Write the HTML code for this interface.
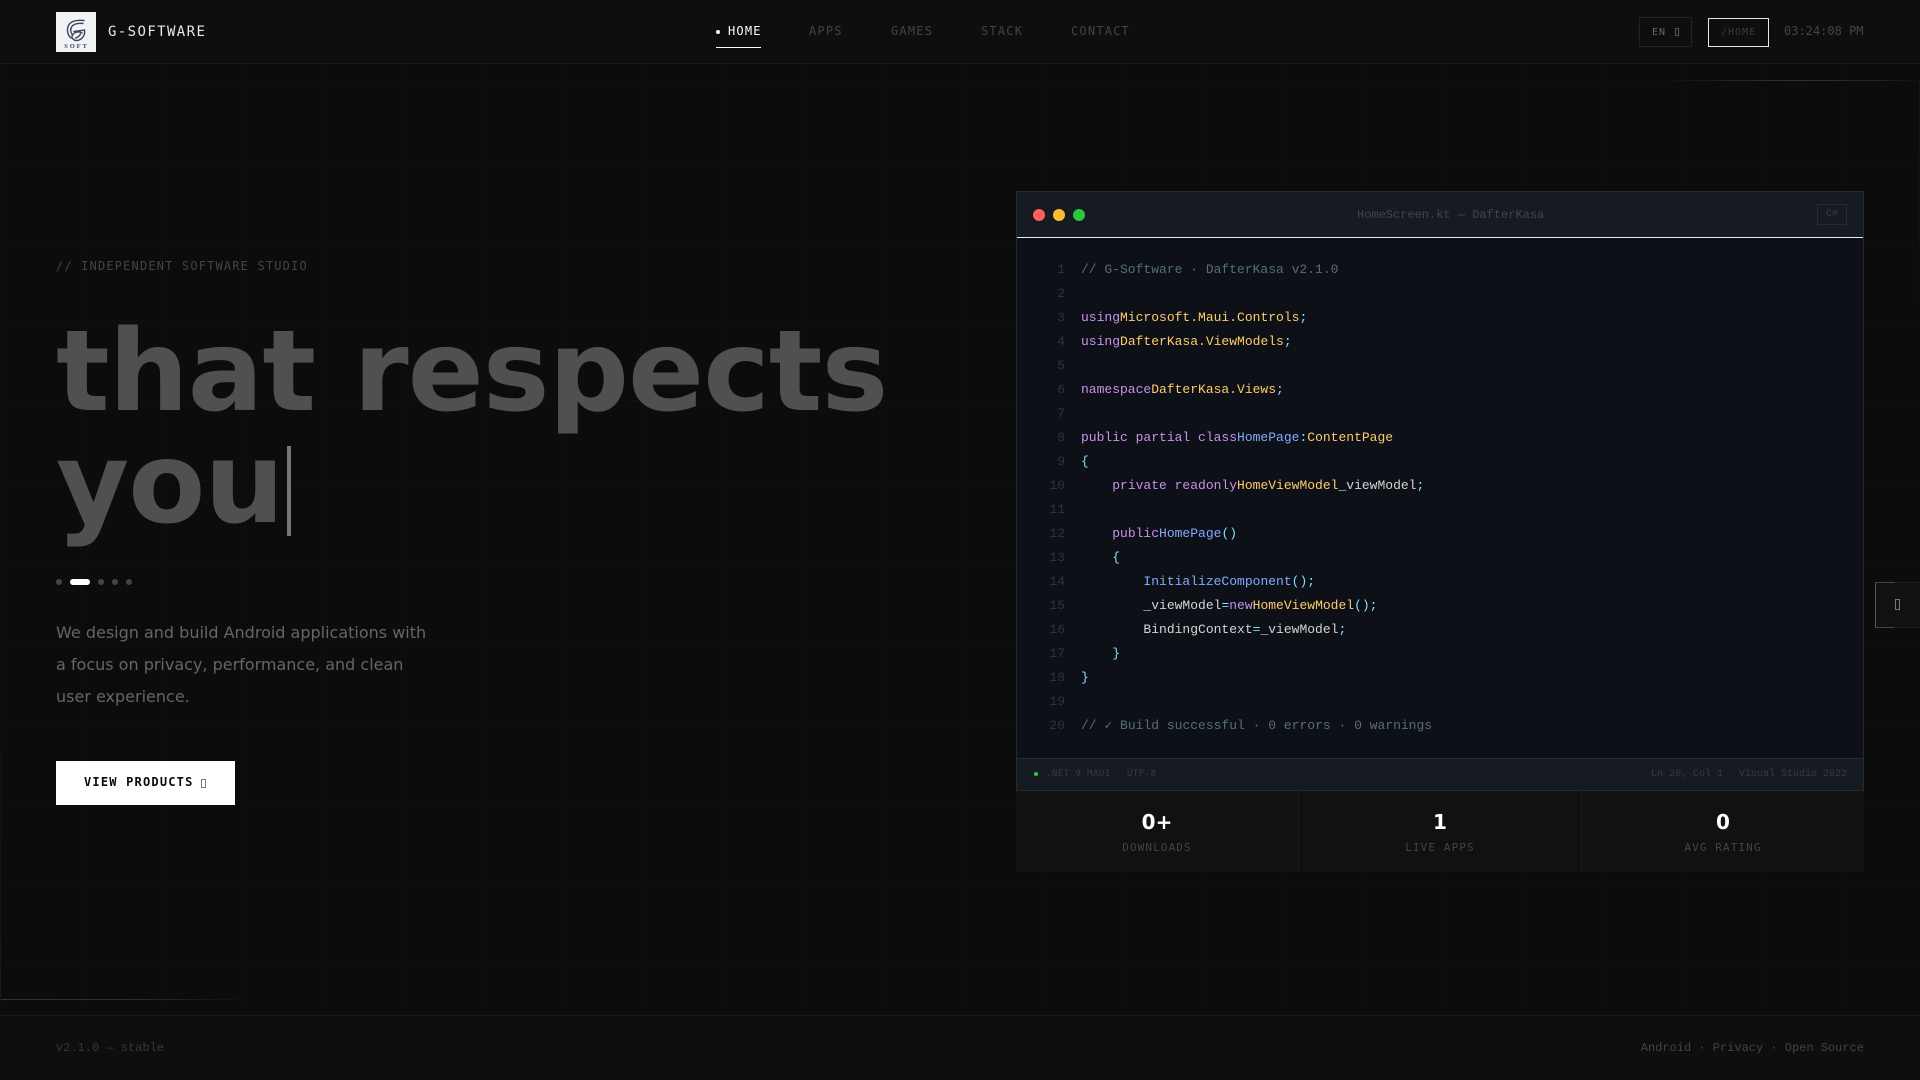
<!DOCTYPE html>
<html lang="en"><head><meta charset="utf-8"><title>G-Software</title>
<style>
*{box-sizing:border-box;margin:0;padding:0}
html,body{width:1920px;height:1080px;overflow:hidden;background:#0c0c0c}
body{position:relative;font-family:"Liberation Mono",monospace;color:#555;
background-image:linear-gradient(#0f0f0f 1px,transparent 1px),linear-gradient(90deg,#0f0f0f 1px,transparent 1px);background-size:80px 80px}
.a{position:absolute;white-space:pre}
.dj{font-family:"DejaVu Sans Mono",monospace}
nav{position:absolute;left:0;top:0;width:1920px;height:64px;background:#0e0e0e;border-bottom:1px solid #1a1a1a}
footer{position:absolute;left:0;top:1015px;width:1920px;height:65px;background:#0e0e0e;border-top:1px solid #1a1a1a}
.n{font-family:"DejaVu Sans Mono",monospace;font-size:12px;letter-spacing:1.2px;line-height:14px;top:24px;color:#444}
.code{position:absolute;left:1017px;top:238px;width:846px;height:520px;background:#0d1017}
.l{position:absolute;left:64px;font-size:13px;line-height:24px;height:24px;margin-top:1px;white-space:pre;color:#d4d4d4}
.ln{position:absolute;left:0;width:48px;text-align:right;font-size:13px;line-height:24px;margin-top:1px;color:#333}
.k{color:#c792ea}.t{color:#ffcb6b}.f{color:#82aaff}.p{color:#89ddff}.c{color:#546e7a}
.s{position:absolute;top:791px;height:81px;background:#111;text-align:center}
.s b{position:absolute;left:0;right:0;top:18px;font:bold 20px/26px "DejaVu Sans",sans-serif;color:#fff}
.s i{position:absolute;left:0;right:0;top:49px;font:normal 11px/16px "DejaVu Sans Mono",monospace;letter-spacing:1.1px;color:#444}
.d{position:absolute;top:579px;width:6px;height:6px;border-radius:3px;background:#444}
.tofu{position:absolute;border:1px solid #777}
</style></head><body>

<nav></nav>
<div class="a" style="left:56px;top:12px;width:40px;height:40px;background:#f1f3f6">
<svg width="40" height="40" viewBox="0 0 40 40" style="position:absolute;left:0;top:0">
<g fill="none" stroke="#3c4660" stroke-width="1.4" stroke-linecap="round">
<path d="M28 8.5C22 8 15 8.5 12.5 13.5C10.5 18 11.5 23 15 26"/>
<path d="M27 11.5C22 11 17.5 12 15.5 15C14 18 15 21 16.5 23"/>
<path d="M18 19.5L28.5 18C29.5 23 26 28 21 28.5C17 28.5 15 25.5 16.5 23C18.5 20 23 19 26 21"/>
<path d="M19.5 26C21.5 25.5 23.5 24 24.5 22"/>
</g></svg>
<span style="position:absolute;left:0;width:41px;top:31px;text-align:center;font:bold 6.5px/8px 'Liberation Serif',serif;letter-spacing:1.9px;color:#3c4660">SOFT</span>
</div>
<div class="a dj" style="left:108px;top:24px;font-size:14px;line-height:17px;letter-spacing:1.4px;color:#e8e8e8">G-SOFTWARE</div>

<div class="a" style="left:716px;top:30px;width:4px;height:4px;border-radius:2px;background:#fff"></div>
<div class="a n" style="left:728px;color:#fff">HOME</div>
<div class="a" style="left:716px;top:47px;width:45px;height:1px;background:#fff"></div>
<div class="a n" style="left:809px">APPS</div>
<div class="a n" style="left:891px">GAMES</div>
<div class="a n" style="left:981px">STACK</div>
<div class="a n" style="left:1071px">CONTACT</div>

<div class="a" style="left:1639px;top:17px;width:53px;height:30px;border:1px solid #222"></div>
<div class="a dj" style="left:1652px;top:26px;font-size:10px;line-height:13px;letter-spacing:1px;color:#666">EN</div>
<div class="tofu" style="left:1675px;top:28px;width:4px;height:8px;border-color:#555"></div>
<div class="a" style="left:1708px;top:18px;width:61px;height:29px;border:1px solid #e8e8e8"></div>
<div class="a dj" style="left:1721px;top:26px;font-size:10px;line-height:13px;letter-spacing:1px;color:#3a3a3a">/HOME</div>
<div class="a dj" style="left:1784px;top:24px;font-size:12px;line-height:14px;color:#444">03:24:08 PM</div>

<div class="a" style="left:1665px;top:80px;width:255px;height:1px;background:linear-gradient(90deg,transparent,#333 50%,#222 85%,transparent)"></div>
<div class="a" style="left:1919px;top:80px;width:1px;height:260px;background:linear-gradient(#161616,transparent)"></div>

<div class="a dj" style="left:56px;top:259px;font-size:12px;line-height:14px;letter-spacing:1.17px;color:#444">// INDEPENDENT SOFTWARE STUDIO</div>
<div class="a" style="left:56px;top:316px;font:bold 112.32px/112.4px 'DejaVu Sans',sans-serif;letter-spacing:-1px;color:#505050">that respects
you</div>
<div class="a" style="left:287px;top:446px;width:4px;height:90px;background:#777"></div>

<div class="d" style="left:56px"></div>
<div class="d" style="left:70px;width:20px;background:#fff"></div>
<div class="d" style="left:98px"></div>
<div class="d" style="left:112px"></div>
<div class="d" style="left:126px"></div>

<div class="a" style="left:56px;top:617px;font:16px/32px 'DejaVu Sans',sans-serif;color:#666">We design and build Android applications with
a focus on privacy, performance, and clean
user experience.</div>

<div class="a" style="left:56px;top:761px;width:179px;height:44px;background:#fff"></div>
<div class="a dj" style="left:84px;top:775px;font-size:12px;font-weight:bold;line-height:14px;letter-spacing:1.2px;color:#0a0a0a">VIEW PRODUCTS</div>
<div class="tofu" style="left:201px;top:779px;width:5px;height:9px"></div>

<!-- code window -->
<div class="a" style="left:1016px;top:191px;width:848px;height:600px;border:1px solid #262a31;background:#161b22"></div>
<div class="a" style="left:1017px;top:237px;width:846px;height:1px;background:#e8e8e8"></div>
<div class="a" style="left:1033px;top:209px;width:12px;height:12px;border-radius:6px;background:#ff5f57"></div>
<div class="a" style="left:1053px;top:209px;width:12px;height:12px;border-radius:6px;background:#febc2e"></div>
<div class="a" style="left:1073px;top:209px;width:12px;height:12px;border-radius:6px;background:#28c840"></div>
<div class="a" style="left:1357px;top:208px;font-size:12px;line-height:14px;color:#444">HomeScreen.kt — DafterKasa</div>
<div class="a" style="left:1817px;top:204px;width:30px;height:21px;border:1px solid #262a31;text-align:center;font-size:10px;line-height:20px;color:#3a3a3a">C#</div>

<div class="code">
<span class="ln" style="top:19px">1</span><div class="l c" style="top:19px">// G-Software · DafterKasa v2.1.0</div>
<span class="ln" style="top:43px">2</span>
<span class="ln" style="top:67px">3</span><div class="l" style="top:67px"><span class="k">using</span><span class="t">Microsoft.Maui.Controls</span><span class="p">;</span></div>
<span class="ln" style="top:91px">4</span><div class="l" style="top:91px"><span class="k">using</span><span class="t">DafterKasa.ViewModels</span><span class="p">;</span></div>
<span class="ln" style="top:115px">5</span>
<span class="ln" style="top:139px">6</span><div class="l" style="top:139px"><span class="k">namespace</span><span class="t">DafterKasa.Views</span><span class="p">;</span></div>
<span class="ln" style="top:163px">7</span>
<span class="ln" style="top:187px">8</span><div class="l" style="top:187px"><span class="k">public partial class</span><span class="f">HomePage</span><span class="p">:</span><span class="t">ContentPage</span></div>
<span class="ln" style="top:211px">9</span><div class="l" style="top:211px"><span class="p">{</span></div>
<span class="ln" style="top:235px">10</span><div class="l" style="top:235px">    <span class="k">private readonly</span><span class="t">HomeViewModel</span>_viewModel<span class="p">;</span></div>
<span class="ln" style="top:259px">11</span>
<span class="ln" style="top:283px">12</span><div class="l" style="top:283px">    <span class="k">public</span><span class="f">HomePage</span><span class="p">()</span></div>
<span class="ln" style="top:307px">13</span><div class="l" style="top:307px">    <span class="p">{</span></div>
<span class="ln" style="top:331px">14</span><div class="l" style="top:331px">        <span class="f">InitializeComponent</span><span class="p">();</span></div>
<span class="ln" style="top:355px">15</span><div class="l" style="top:355px">        _viewModel<span class="p">=</span><span class="k">new</span><span class="t">HomeViewModel</span><span class="p">();</span></div>
<span class="ln" style="top:379px">16</span><div class="l" style="top:379px">        BindingContext<span class="p">=</span>_viewModel<span class="p">;</span></div>
<span class="ln" style="top:403px">17</span><div class="l" style="top:403px">    <span class="p">}</span></div>
<span class="ln" style="top:427px">18</span><div class="l" style="top:427px"><span class="p">}</span></div>
<span class="ln" style="top:451px">19</span>
<span class="ln" style="top:475px">20</span><div class="l c" style="top:475px">// ✓ Build successful · 0 errors · 0 warnings</div>
</div>

<div class="a" style="left:1017px;top:758px;width:846px;height:1px;background:#262a31"></div>
<div class="a" style="left:1034px;top:772px;width:4px;height:4px;border-radius:2px;background:#28c840"></div>
<div class="a dj" style="left:1046px;top:768px;font-size:9px;line-height:12px;letter-spacing:.45px;color:#3a3a3a">.NET 9 MAUI</div>
<div class="a dj" style="left:1127px;top:768px;font-size:9px;line-height:12px;letter-spacing:.45px;color:#3a3a3a">UTF-8</div>
<div class="a" style="left:1651px;top:769px;font-size:10px;line-height:12px;color:#3a3a3a">Ln 20, Col 1</div>
<div class="a" style="left:1739px;top:769px;font-size:10px;line-height:12px;color:#3a3a3a">Visual Studio 2022</div>

<div class="s" style="left:1016px;width:283px;border-right:1px solid #1a1a1a"><b>0+</b><i>DOWNLOADS</i></div>
<div class="s" style="left:1299px;width:283px;border-right:1px solid #1a1a1a"><b>1</b><i>LIVE APPS</i></div>
<div class="s" style="left:1582px;width:282px"><b>0</b><i>AVG RATING</i></div>

<div class="a" style="left:1875px;top:582px;width:45px;height:46px;background:#111;border:1px solid #1c1c1c;border-right:0"></div>
<div class="a" style="left:1875px;top:582px;width:1px;height:46px;background:#555"></div>
<div class="a" style="left:1875px;top:582px;width:20px;height:1px;background:#444"></div>
<div class="a" style="left:1875px;top:627px;width:19px;height:1px;background:#444"></div>
<div class="tofu" style="left:1895px;top:599px;width:5px;height:11px"></div>

<div class="a" style="left:0;top:999px;width:250px;height:1px;background:linear-gradient(90deg,#333,#2a2a2a 60%,transparent)"></div>
<div class="a" style="left:0;top:740px;width:1px;height:260px;background:linear-gradient(transparent,#1a1a1a)"></div>

<footer></footer>
<div class="a" style="left:56px;top:1041px;font-size:12px;line-height:14px;color:#383838">v2.1.0 — stable</div>
<div class="a" style="right:56px;top:1041px;font-size:12px;line-height:14px;color:#444">Android · Privacy · Open Source</div>
</body></html>
